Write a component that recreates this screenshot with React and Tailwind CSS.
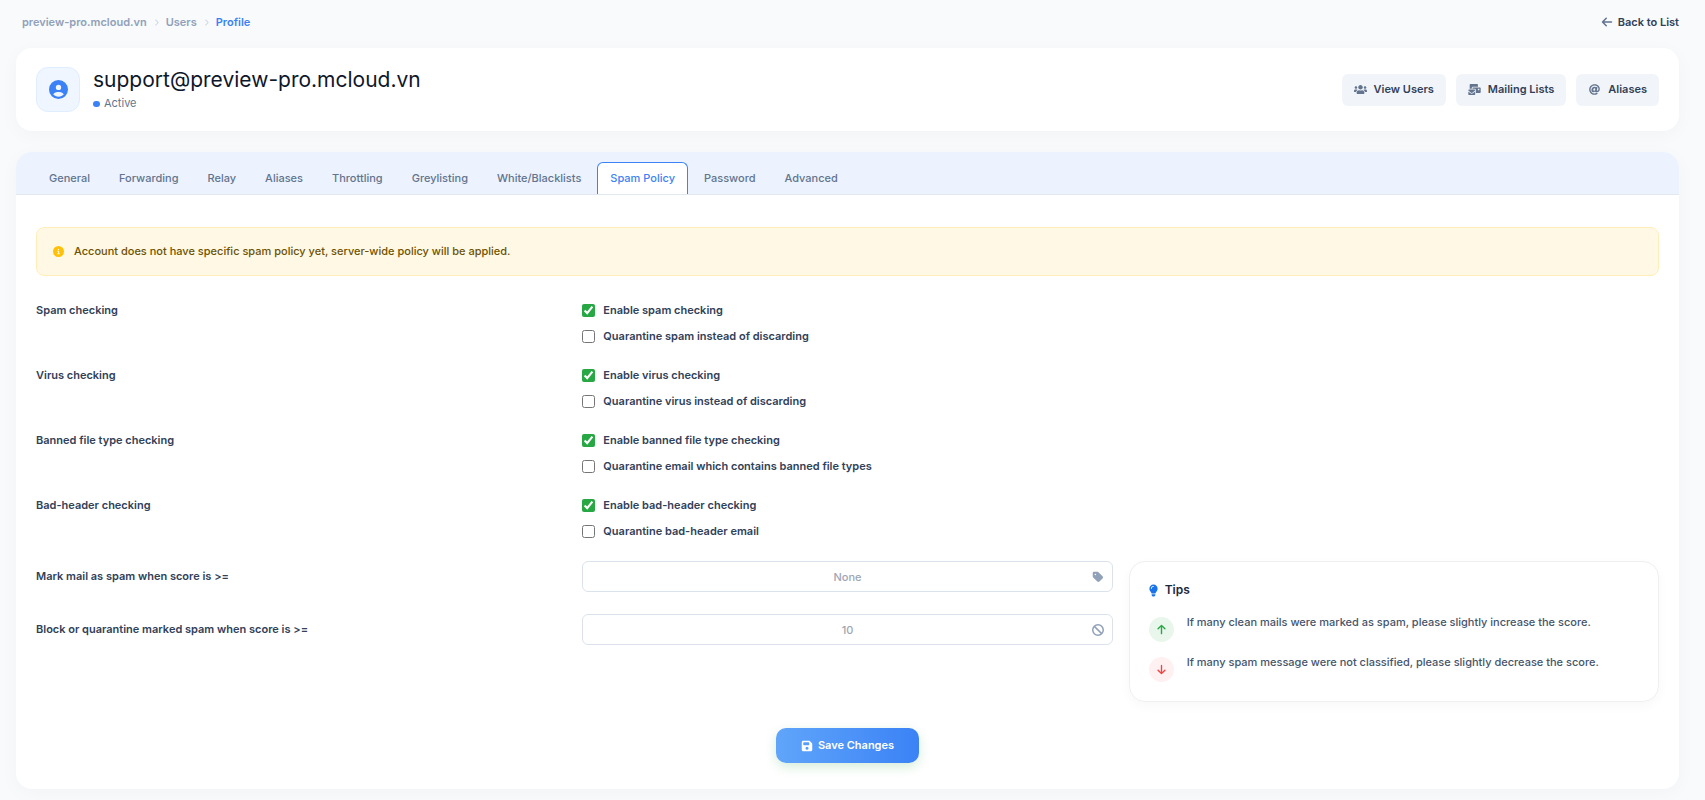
import { useState } from 'react';
import {
  FaArrowLeft,
  FaArrowUp,
  FaArrowDown,
  FaBan,
  FaChevronRight,
  FaCircleInfo,
  FaCircleUser,
  FaFloppyDisk,
  FaLightbulb,
  FaTag
} from 'react-icons/fa6';
import { FaAt, FaMailBulk, FaUsers } from 'react-icons/fa';

const tabs = [
  'General',
  'Forwarding',
  'Relay',
  'Aliases',
  'Throttling',
  'Greylisting',
  'White/Blacklists',
  'Spam Policy',
  'Password',
  'Advanced'
];

const headerLinks = [
  { label: 'View Users', icon: FaUsers },
  { label: 'Mailing Lists', icon: FaMailBulk },
  { label: 'Aliases', icon: FaAt }
];

const checks = [
  {
    title: 'Spam checking',
    options: [
      { id: 'spam', label: 'Enable spam checking', on: true },
      { id: 'spam_quarantine', label: 'Quarantine spam instead of discarding', on: false }
    ]
  },
  {
    title: 'Virus checking',
    options: [
      { id: 'virus', label: 'Enable virus checking', on: true },
      { id: 'virus_quarantine', label: 'Quarantine virus instead of discarding', on: false }
    ]
  },
  {
    title: 'Banned file type checking',
    options: [
      { id: 'banned', label: 'Enable banned file type checking', on: true },
      { id: 'banned_quarantine', label: 'Quarantine email which contains banned file types', on: false }
    ]
  },
  {
    title: 'Bad-header checking',
    options: [
      { id: 'header', label: 'Enable bad-header checking', on: true },
      { id: 'header_quarantine', label: 'Quarantine bad-header email', on: false }
    ]
  }
];

const scores = [
  { id: 'tag_score', label: 'Mark mail as spam when score is >=', placeholder: 'None', icon: FaTag },
  { id: 'kill_score', label: 'Block or quarantine marked spam when score is >=', placeholder: '10', icon: FaBan }
];

const App = () => {
  const [activeTab, setActiveTab] = useState('Spam Policy');

  return (
    <div className="min-h-screen bg-[#f8fafc] pl-4 pr-[26px] pb-[11px] font-['Inter',sans-serif] text-[11px] font-semibold text-slate-700">
      {/* Breadcrumb */}
      <div className="flex h-12 items-center justify-between pl-[6px] pb-1">
        <nav className="flex items-center gap-[7px] text-slate-400">
          <a href="#domain">preview-pro.mcloud.vn</a>
          <FaChevronRight className="h-[7px] w-[5px] text-slate-300" />
          <a href="#users">Users</a>
          <FaChevronRight className="h-[7px] w-[5px] text-slate-300" />
          <a href="#profile" className="text-[#3b82f6]">Profile</a>
        </nav>
        <a href="#list" className="flex items-center gap-[5px]">
          <FaArrowLeft className="size-[12px] text-slate-500" />
          Back to List
        </a>
      </div>

      {/* Account header */}
      <header className="flex items-center justify-between rounded-2xl bg-white px-5 py-[19px] shadow-[0_4px_20px_rgba(0,0,0,0.03)]">
        <div className="flex items-center gap-[13px]">
          <div className="flex h-[45px] w-11 items-center justify-center rounded-xl border border-[#e0edff] bg-[#eff6ff] text-[#3b82f6]">
            <FaCircleUser className="size-[19px]" />
          </div>
          <div>
            <h1 className="text-[21px] leading-[26px] font-normal text-slate-900">support@preview-pro.mcloud.vn</h1>
            <div className="mt-[2px] flex items-center gap-1 leading-[17px] font-normal text-slate-500">
              <span className="h-[6px] w-[7px] rounded-full bg-[#3b82f6]" />
              Active
            </div>
          </div>
        </div>
        <div className="flex gap-[10px]">
          {headerLinks.map(({ label, icon: Icon }) => (
            <a key={label} href="#" className="flex h-8 items-center gap-[7px] rounded-md bg-slate-100 px-3">
              <Icon className="h-[11px] w-[13px] text-slate-500" />
              {label}
            </a>
          ))}
        </div>
      </header>

      <main className="mt-[21px] overflow-hidden rounded-2xl bg-white shadow-[0_4px_20px_rgba(0,0,0,0.03)]">
        {/* Tabs */}
        <div className="flex h-[43px] items-end gap-[3px] border-b border-slate-200 bg-[#ecf3fe] px-5">
          {tabs.map(tab => (
            <button
              key={tab}
              type="button"
              onClick={() => setActiveTab(tab)}
              className={`h-8 rounded-t-md border border-b-0 px-[12px] font-medium ${
                activeTab === tab
                  ? 'border-[#3b82f6] bg-white text-[#3b82f6]'
                  : 'border-transparent text-slate-500'
              }`}
            >
              {tab}
            </button>
          ))}
        </div>

        <form className="px-5 pt-8 pb-[26px]" onSubmit={e => e.preventDefault()}>
          <div className="flex h-[49px] items-center gap-[10px] rounded-lg border border-[#ffeeba] bg-[#fff8e5] px-4 font-medium text-[#6d5200]">
            <FaCircleInfo className="size-[11px] text-[#ffc107]" />
            Account does not have specific spam policy yet, server-wide policy will be applied.
          </div>

          {/* Checks */}
          <div className="mt-[21px] flex flex-col">
            {checks.map(group => (
              <fieldset key={group.title} className="grid h-[65px] grid-cols-3 gap-x-4">
                <legend className="float-left h-[26px] leading-[26px]">{group.title}</legend>
                <div className="col-start-2 col-span-2">
                  {group.options.map(opt => (
                    <label key={opt.id} className="flex h-[26px] items-center gap-2">
                      <input type="checkbox" defaultChecked={opt.on} className="size-[13px] accent-[#28a745]" />
                      {opt.label}
                    </label>
                  ))}
                </div>
              </fieldset>
            ))}
          </div>

          {/* Scores */}
          <div className="mt-1 grid grid-cols-3 gap-x-4">
            <div className="col-span-2 flex flex-col gap-[22px]">
              {scores.map(({ id, label, placeholder, icon: Icon }) => (
                <div key={id} className="grid grid-cols-2 gap-x-4">
                  <label htmlFor={id} className="leading-[31px]">{label}</label>
                  <div className="relative">
                    <input
                      id={id}
                      type="text"
                      placeholder={placeholder}
                      className="block h-[31px] w-full rounded-md border border-[#dce2ec] bg-white px-3 text-center font-medium placeholder:text-[#a0a5b2]"
                    />
                    <Icon className="absolute top-[10px] right-[9px] size-[12px] text-slate-400" />
                  </div>
                </div>
              ))}
            </div>

            <aside className="rounded-2xl border border-[#eeeff1] px-[19px] pt-[18px] pb-[19px] shadow-[0_4px_12px_rgba(0,0,0,0.03)]">
              <h2 className="flex items-center gap-[7px] text-xs leading-5 text-slate-800">
                <FaLightbulb className="h-[13px] w-[9px] text-[#1a73e8]" />
                Tips
              </h2>
              <ul className="mt-[17px] flex flex-col gap-[15px] font-medium text-slate-600">
                <li className="flex gap-[13px]">
                  <span className="flex size-[25px] shrink-0 items-center justify-center rounded-full bg-[#e9f6ec] text-[#28a745]">
                    <FaArrowUp className="size-[11px]" />
                  </span>
                  <p className="leading-[10px]">If many clean mails were marked as spam, please slightly increase the score.</p>
                </li>
                <li className="flex gap-[13px]">
                  <span className="flex size-[25px] shrink-0 items-center justify-center rounded-full bg-[#fff0f1] text-[#ef4444]">
                    <FaArrowDown className="size-[11px]" />
                  </span>
                  <p className="leading-[10px]">If many spam message were not classified, please slightly decrease the score.</p>
                </li>
              </ul>
            </aside>
          </div>

          <div className="mt-[26px] flex justify-center">
            <button
              type="submit"
              className="flex h-[35px] items-center gap-[5px] rounded-[10px] bg-linear-to-r from-[#60a5fa] to-[#3b82f6] px-[25px] text-white shadow-[0_4px_12px_rgba(40,167,69,0.2)]"
            >
              <FaFloppyDisk className="size-[12px]" />
              Save Changes
            </button>
          </div>
        </form>
      </main>
    </div>
  );
};

export default App;
